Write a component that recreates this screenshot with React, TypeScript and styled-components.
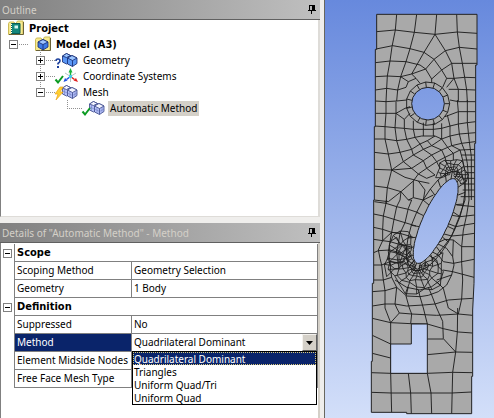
import React from "react";
import styled, { createGlobalStyle } from "styled-components";

const headingFont = `"DejaVu Sans Condensed", "DejaVu Sans", sans-serif`;

const GlobalStyle = createGlobalStyle`
  * { box-sizing: border-box; }
  html, body, #root { height: 100%; }
  body {
    margin: 0;
    background: #efeeec;
    color: #000;
    font: 10px/16px "Noto Sans", "Open Sans", sans-serif;
  }
  ul { list-style: none; margin: 0; padding: 0; }
`;

const Workspace = styled.div`
  display: grid;
  grid-template-columns: minmax(0, 320fr) minmax(0, 174fr);
  min-height: 100%;
`;

const Sidebar = styled.div`
  display: flex;
  flex-direction: column;
  gap: 6px;
  min-width: 0;
`;

const Panel = styled.section<{ $grow?: boolean }>`
  display: flex;
  flex-direction: column;
  flex: ${(p) => (p.$grow ? "1 1 auto" : "0 0 auto")};
`;

const TitleBar = styled.header`
  display: flex;
  align-items: center;
  justify-content: space-between;
  height: 20px;
  padding: 0 4px 0 2px;
  background: linear-gradient(90deg, #808080, #c0c0c0);
  border-bottom: 1px solid #606060;
`;

const Title = styled.h2`
  margin: 0;
  font-size: 10px;
  font-weight: 400;
  color: #d4d0c8;
  white-space: nowrap;
`;

const PinButton = styled.button`
  display: flex;
  padding: 0;
  border: 0;
  background: none;
`;

const PanelBody = styled.div`
  flex: 1;
  background: #fff;
  border-left: 1px solid #808080;
  border-right: 2px solid #dedcd8;
`;

const TreeBody = styled(PanelBody)`
  min-height: 197px;
  padding-left: 7px;
  border-bottom: 1px solid #dedcd8;
`;

const TreeRow = styled.li<{ $level: number }>`
  display: flex;
  align-items: center;
  height: 16px;
  padding-left: ${(p) => p.$level * 27}px;
`;

const TreeLabel = styled.span<{ $bold?: boolean; $selected?: boolean }>`
  height: 15px;
  margin-left: 3px;
  padding: 0 2px;
  line-height: 15px;
  font-family: ${(p) => (p.$bold ? headingFont : "inherit")};
  font-size: ${(p) => (p.$bold ? 11 : 10)}px;
  font-weight: ${(p) => (p.$bold ? 700 : 400)};
  background: ${(p) => (p.$selected ? "#d4d0c8" : "transparent")};
  white-space: nowrap;
`;

const Toggle = styled.button`
  display: flex;
  flex: none;
  padding: 0;
  border: 0;
  background: none;
`;

const Icon = styled.svg`
  display: block;
  flex: none;
  overflow: visible;
`;

const PropertyBody = styled(PanelBody)`
  padding-top: 1px;
  border-right-color: #d4d0c8;
`;

const PropertyTable = styled.table`
  width: 100%;
  border-collapse: separate;
  border-spacing: 0;
  table-layout: fixed;
`;

const GutterCol = styled.col` width: 14px; `;
const NameCol = styled.col` width: 117px; `;

const Gutter = styled.td`
  padding: 0 0 0 1px;
  border-right: 1px solid #808080;
`;

const GroupHead = styled.th`
  height: 18px;
  padding: 0 2px;
  border-bottom: 1px solid #808080;
  border-right: 1px solid #808080;
  font-family: ${headingFont};
  font-size: 11px;
  line-height: 17px;
  text-align: left;
`;

const NameCell = styled.th<{ $active?: boolean }>`
  height: 18px;
  padding: 0 2px;
  border-bottom: 1px solid #808080;
  border-right: 1px solid #808080;
  font-weight: 400;
  line-height: 17px;
  text-align: left;
  white-space: nowrap;
  color: ${(p) => (p.$active ? "#fff" : "#000")};
  background: ${(p) => (p.$active ? "#0a246a" : "#fff")};
`;

const ValueCell = styled.td`
  position: relative;
  height: 18px;
  padding: 0 0 0 2px;
  border-bottom: 1px solid #808080;
  border-right: 1px solid #808080;
  line-height: 17px;
  white-space: nowrap;
`;

const Combo = styled.div`
  display: flex;
  height: 17px;
`;

const ComboSelect = styled.select`
  appearance: none;
  flex: 1;
  min-width: 0;
  height: 17px;
  padding: 0;
  border: 0;
  outline: 0;
  background: #fff;
  color: #000;
  font: inherit;
`;

const ComboArrow = styled.button`
  display: grid;
  place-items: center;
  width: 15px;
  height: 17px;
  padding: 0;
  border: 1px solid;
  border-color: #f4f2ee #606060 #606060 #f4f2ee;
  background: #d4d0c8;
`;

const OptionList = styled.ul`
  position: absolute;
  z-index: 1;
  top: 17px;
  left: 0;
  right: 0;
  border: 1px solid #000;
  background: #fff;
`;

const Option = styled.li<{ $active?: boolean }>`
  height: 13px;
  border: 1px dotted ${(p) => (p.$active ? "#d8c878" : "transparent")};
  line-height: 12px;
  color: ${(p) => (p.$active ? "#fff" : "#000")};
  background: ${(p) => (p.$active ? "#0a246a" : "#fff")};
`;

const Viewport = styled.main`
  margin-left: 4px;
  padding-left: 45px;
  border-left: 1px solid #68675f;
  background: linear-gradient(180deg, #6789dd, #d3dff9);
`;

const Pin = () => (
  <Icon width="8" height="10" viewBox="0 0 8 10" shapeRendering="crispEdges" aria-hidden="true">
    <path d="M1 0h6v5h1v1H0V5h1zM3 6h1v3H3z" fill="#000" />
    <path d="M2 1h2v4H2z" fill="#b8b8b8" />
  </Icon>
);

const Expander = ({ open }: { open: boolean }) => (
  <Icon width="11" height="11" viewBox="0 0 11 11" shapeRendering="crispEdges" aria-hidden="true">
    <path d="M1.5 1.5h8v8h-8z" fill="#fff" stroke="#808080" />
    <path d={open ? "M3 5h5v1H3z" : "M3 5h5v1H3zM5 3h1v5H5z"} fill="#000" />
  </Icon>
);

const Dots = ({ d }: { d: string }) => (
  <path d={d} fill="none" stroke="#909090" strokeDasharray="1 1" shapeRendering="crispEdges" />
);

const Lead = ({ width = 9, up = 0, down = 0 }: { width?: number; up?: number; down?: number }) => (
  <Icon width={width} height="16" viewBox={`0 0 ${width} 16`} aria-hidden="true">
    <Dots d="M0 8.500H9" />
    {up > 0 && <Dots d={`M-5.500 ${3 - up}V3`} />}
    {down > 0 && <Dots d={`M-5.500 14V${14 + down}`} />}
  </Icon>
);

const FolderBack = () => (
  <>
    <path d="M.5 3.500l1-1.500H6l1 1.500h1L9.500 1H15v13.500H.5z" fill="#f7ea90" stroke="#cdbb55" />
    <path d="M1 14.500h14.500V2" fill="none" stroke="#6b6238" />
  </>
);

const ProjectIcon = () => (
  <Icon width="16" height="16" viewBox="0 0 16 16" aria-hidden="true">
    <FolderBack />
    <path d="M3.500 3.500h8.500v10H3.500z" fill="#15877b" stroke="#0a5a52" />
    <path d="M3.500 4v9" stroke="#fff" strokeDasharray="1 1" />
    <path d="M6.500 5.500h3.500v3H6.500z" fill="#d6f5f0" />
  </Icon>
);

const ModelIcon = () => (
  <Icon width="16" height="16" viewBox="0 0 16 16" aria-hidden="true">
    <FolderBack />
    <g stroke="#14286e" strokeWidth=".8" strokeLinejoin="round">
      <path d="M8 3.500l5 2.500v5l-5 3-5-3V6z" fill="#3f7ae6" />
      <path d="M8 3.500L13 6 8 8.500 3 6z" fill="#9cc2ff" />
      <path d="M8 8.500V14" />
    </g>
  </Icon>
);

const Tick = () => <path d="M.5 11.500L3 14.500 8 8" fill="none" stroke="#0c9b22" strokeWidth="2" />;
const Bolt = () => <path d="M5 3L0 10h3l-2 6 7-8H5l3-5z" fill="#ffd030" stroke="#eda51c" strokeWidth=".7" />;
const Question = () => (
  <>
    <path d="M1 9q0-2 2-2t2 2q0 1-2 2.500v1" fill="none" stroke="#1b3f9c" strokeWidth="1.600" />
    <path d="M2 14h2v2H2z" fill="#1b3f9c" />
  </>
);

const Blocks = ({ meshed }: { meshed?: boolean }) => {
  const face = meshed ? "#b4c0f8" : "#5a96f4";
  const top = meshed ? "#f4f5ff" : "#9cc6ff";
  return (
    <g stroke={meshed ? "#3a4688" : "#14286e"} strokeWidth=".8" strokeLinejoin="round">
      <path d="M7.500 4l4-2.500 4 2v6l-4 2.500-4-2z" fill={face} />
      <path d="M7.500 4l4-2.500 4 2-4 2z" fill={top} />
      <path d="M12.500 6l4.500-2.500L22 6v5.500L17.500 14.500l-5-2.500z" fill={face} />
      <path d="M12.500 6L17 3.500 22 6l-4.500 2.500z" fill={top} />
      <path d="M17.500 8.500v6" />
      {meshed && (
        <path d="M9.500 5v6M7.500 7l5 2M15 7.500v5.500M20 7v5.500M12.500 9l5 2.500L22 9" fill="none" stroke="#5563a8" strokeWidth=".4" />
      )}
    </g>
  );
};

const ItemIcon = ({ status, kind }: { status: "ask" | "ok" | "bolt"; kind: "geometry" | "axes" | "mesh" }) => (
  <Icon width="23" height="16" viewBox="0 0 23 16" aria-hidden="true">
    {kind === "axes" ? (
      <g fill="none">
        <path d="M10 5l5.500 3.500L21 5M15.500 9v5" stroke="#b9c4c4" />
        <path d="M15.500 8.500V3" stroke="#19b43c" strokeWidth="1.500" />
        <path d="M13.500 4.500l2-4.500 2 4.500z" fill="#19b43c" />
        <path d="M15.500 8.500l-4 3" stroke="#2050e0" strokeWidth="1.500" />
        <path d="M8.500 14l1.500-4 2.500 2.500z" fill="#2050e0" />
        <path d="M15.500 8.500l4 3" stroke="#e02020" strokeWidth="1.500" />
        <path d="M23 14l-4.500-1.500L21 10z" fill="#e02020" />
        <path d="M14 7h3v3h-3z" fill="#46c8e8" />
      </g>
    ) : (
      <Blocks meshed={kind === "mesh"} />
    )}
    {status === "ok" && <Tick />}
    {status === "bolt" && <Bolt />}
    {status === "ask" && <Question />}
  </Icon>
);

/* Mesh geometry; three drawing units to one screen pixel. */
const BODY =
  "M20 43H321V195H317V430H314V660L312 850L308 930V1129H305V1241H110V1237H4V1084H7V850H11V600H13V380H16V148H20Z";
const NOTCH = "M124 972H172V1120H62V1032H124Z";
const CIRCLE = "M125 311a49 49 0 1 0 98 0a49 49 0 1 0 -98 0Z";

const rad = (deg: number) => (deg * Math.PI) / 180;
const SLOT = { cx: 197, cy: 663, rx: 39, ry: 138, tilt: 24.4 };

const slotPoint = (deg: number, grow: number) => {
  const x = (SLOT.rx + grow) * Math.cos(rad(deg));
  const y = (SLOT.ry + grow) * Math.sin(rad(deg));
  const t = rad(SLOT.tilt);
  return [
    Math.round(SLOT.cx + x * Math.cos(t) - y * Math.sin(t)),
    Math.round(SLOT.cy + x * Math.sin(t) + y * Math.cos(t)),
  ];
};

const toPath = (points: number[][], close = false) =>
  "M" + points.map((p) => p.join(" ")).join("L") + (close ? "Z" : "");

const range = (from: number, to: number, step: number) => {
  const out: number[] = [];
  for (let v = from; v <= to; v += step) out.push(v);
  return out;
};

const slotEdge = toPath(range(0, 355, 5).map((d) => slotPoint(d, 0)), true);
const slotRing = toPath(range(0, 345, 15).map((d) => slotPoint(d, 24)), true);
const slotSpokes = range(0, 345, 15).map((d) => toPath([slotPoint(d, 0), slotPoint(d, 24)])).join("");

const fan = (cx: number, cy: number, from: number, to: number, step: number, radii: number[]) => {
  const at = (r: number, d: number) => {
    const wobble = 1 + 0.12 * Math.sin(d * 7 + r * 3);
    const turn = d + 4 * Math.sin(r * 5 + d);
    return [Math.round(cx + r * wobble * Math.cos(rad(turn))), Math.round(cy + r * wobble * Math.sin(rad(turn)))];
  };
  const rings = radii.map((r) => toPath(range(from, to, step).map((d) => at(r, d))));
  const spokes = range(from, to, step).map((d, i) => toPath(radii.slice(i % 2).map((r) => at(r, d))));
  return rings.join("") + spokes.join("");
};

const topFan = fan(246, 522, 165, 405, 20, [7, 14, 22, 32, 45]);
const lowFan = fan(142, 800, -25, 235, 20, [7, 13, 21, 31, 44, 60, 80]);
const lowSide = fan(128, 778, 150, 262, 16, [14, 24, 36, 50, 66, 84]);
const circlePoint = (d: number, r: number) => [
  Math.round(174 + r * Math.cos(rad(d))),
  Math.round(311 + r * Math.sin(rad(d))),
];
const holeRing =
  toPath(range(0, 336, 24).map((d) => circlePoint(d, 65)), true) +
  range(0, 336, 24).map((d) => toPath([circlePoint(d, 49), circlePoint(d, 65)])).join("");

const UPPER =
  "M20 95L75 90 133 97 195 103 262 96 321 100M18 147L68 137 120 146 162 157 192 178 226 152 268 142 321 147" +
  "M16 188L60 183 108 185 150 195 167 207 192 178 215 210M167 207L185 237 215 210 245 190 321 190" +
  "M16 230L52 228 92 230 125 222 167 207M215 210L230 235 252 235 284 232 317 233M185 237V248" +
  "M16 270L50 265 83 270 108 262 115 245 138 235 125 222M92 230L115 245M138 235L150 250M230 235L218 262M252 235L230 262" +
  "M16 303L48 305 80 303 110 300M236 268H265L317 270M240 300L265 305 317 305" +
  "M80 43L76 90 66 140 60 183 52 228 50 265 48 305M140 43L133 97 120 146 108 185 92 230 83 270 80 303" +
  "M200 43L195 103 162 157 125 222M195 103L226 152 245 190 252 235 265 268 265 305" +
  "M260 43L262 96 268 142 277 190 284 232 290 270 292 305";

const MIDDLE =
  "M17 40H78M13 78L45 80 75 83 103 85 130 88H190L215 85 240 78 265 72 292 68 317 65" +
  "M13 117H45L80 122 110 118 135 112 155 108H195L215 117M13 157L55 162 90 157 125 148 150 132 172 122 195 108" +
  "M13 208L65 210 100 185 130 165 160 148 185 137 215 117 240 108 268 102 317 98" +
  "M65 210L125 205 160 182 185 165 215 150 245 137 275 130 315 125M13 258L52 263 93 275 130 243 145 222 170 205 200 185 225 172 250 160 270 150 315 148" +
  "M65 210L105 232 145 243 178 250 M125 205L145 222 170 235 195 225M13 300L55 305 93 275 115 300 130 293 160 300 190 285M130 243V293M145 243L165 270 160 300" +
  "M48 5V40L45 80V117L55 162 65 210 52 263 48 310M78 5V40L75 83 80 122 90 157 100 185 125 205M78 40L105 25 120 20M78 40L103 58 120 40" +
  "M103 58V85L110 118 125 148 130 165 160 182 170 205 195 225M130 62V88L135 112 150 132 160 148 185 165 200 185 210 205" +
  "M160 68V108M190 68V108M172 122L185 137 215 150 225 172 230 190M215 70V85L215 117 235 145 250 160V180" +
  "M232 45L240 78V108L245 137 270 150 278 180 286 220 285 300M262 0L265 35V72L268 102 275 130 285 155 292 190 295 230 297 300" +
  "M292 0V68L295 98 298 125 304 170V300M225 50L265 35H317" +
  "M274 165H315M280 180H314M284 200H314M286 218H314M282 235H314M278 252H314M278 270H314M272 290H314M93 275L90 300M115 300L125 300";

const LOWER =
  "M13 5L48 10 80 20 115 28 145 38M11 42L40 48 72 58 105 68 138 78M11 82L38 88 65 97 90 100 130 112M11 118L38 122 60 125 88 133 120 140" +
  "M11 158L25 152 60 150 95 160M11 195L35 195 60 185 85 190M9 240L40 240 65 232M7 275L45 272 80 262M7 318L45 312H75L110 318 160 315 195 312 235 300 275 297 308 295" +
  "M50 0L48 10 40 48 38 88V122L25 150 30 175 35 195 40 240 45 272 45 324M90 0L80 20 72 58 65 97 60 125 55 155 60 185 62 210 65 232 80 262 75 312" +
  "M125 0L115 25 105 68 90 100 85 130 78 160M38 122L65 97 90 100M60 125L80 112 90 135" +
  "M248 35L270 50 314 45M260 15L314 20M232 70L258 80 283 75 314 70M215 100L245 108 278 105 313 100M200 130L225 118 250 120 275 140 312 140" +
  "M297 0L290 45 280 90 275 140V190L278 240 275 297 265 342M285 0L268 50 245 108 225 135 200 165" +
  "M185 155L205 165 220 185M200 130L230 145 248 170 252 195 245 225 230 255 205 275 175 286 150 290 110 288 80 262M220 185L250 190 312 178M175 165L200 180 205 200" +
  "M218 210L248 215 312 232M200 240L245 225M250 120L248 170M205 200L220 215 212 240 185 260 150 270 110 262 75 240" +
  "M115 260L108 288 118 324M145 270L150 290 160 324M175 262L185 285 200 324M200 245L220 265 235 324";

const FOOT =
  "M7 31L62 44 122 47 172 48 220 62 265 72 308 75M88 15L125 18 200 22 265 18 308 22M62 44L88 15 80 0 75 -12M45 0L62 44M118 0L125 18 122 47M160 0L172 48" +
  "M200 0L218 40 220 92 257 132M263 0L262 72 257 132 248 193 245 317M235 0L265 18M172 93H220M172 140L257 132 308 133M7 82L62 108M7 136L62 150" +
  "M4 194L62 196H172L248 193 308 194M4 253L64 255H183L245 255 305 252M62 44V196L65 317M115 196L122 255 124 317M172 196L183 255 185 317";

const MeshPlot = () => (
  <Icon width="124" height="418" viewBox="0 0 372 1254" role="img" aria-label="Meshed plate">
    <defs>
      <clipPath id="solid">
        <path d={BODY + NOTCH + CIRCLE + slotEdge} clipRule="evenodd" />
      </clipPath>
    </defs>
    <path d={BODY + NOTCH + CIRCLE + slotEdge} fill="#a9a9a9" fillRule="evenodd" />
    <g clipPath="url(#solid)" fill="none" stroke="#1c1c1c" strokeWidth="2.800">
      <path d={UPPER} />
      <path d={MIDDLE} transform="translate(0 300)" />
      <path d={LOWER} transform="translate(0 600)" />
      <path d={FOOT} transform="translate(0 924)" />
      <path d={holeRing + slotRing + slotSpokes} />
      <path d={topFan + lowFan + lowSide} strokeWidth="2.600" />
    </g>
    <path d={BODY + NOTCH + CIRCLE + slotEdge} fill="none" stroke="#222" strokeWidth="3" />
  </Icon>
);

const PanelTitle = ({ id, children }: { id: string; children: React.ReactNode }) => (
  <TitleBar>
    <Title id={id}>{children}</Title>
    <PinButton type="button" aria-label="Auto hide"><Pin /></PinButton>
  </TitleBar>
);

const ExpandButton = ({ open, name }: { open: boolean; name: string }) => (
  <Toggle type="button" aria-expanded={open} aria-label={name}><Expander open={open} /></Toggle>
);

const METHODS = ["Quadrilateral Dominant", "Triangles", "Uniform Quad/Tri", "Uniform Quad"];

const Group = ({ name }: { name: string }) => (
  <tr>
    <Gutter><ExpandButton open name={name} /></Gutter>
    <GroupHead colSpan={2} scope="colgroup">{name}</GroupHead>
  </tr>
);

const Property = ({ name, value }: { name: string; value?: string }) => (
  <tr>
    <Gutter />
    <NameCell scope="row">{name}</NameCell>
    <ValueCell>{value}</ValueCell>
  </tr>
);

export default function App() {
  return (
    <>
      <GlobalStyle />
      <Workspace>
        <Sidebar>
          <Panel aria-labelledby="outline">
            <PanelTitle id="outline">Outline</PanelTitle>
            <TreeBody>
              <ul>
                <TreeRow $level={0}><ProjectIcon /><TreeLabel $bold>Project</TreeLabel></TreeRow>
                <TreeRow $level={0}>
                  <ExpandButton open name="Model" /><Lead width={16} />
                  <ModelIcon /><TreeLabel $bold>Model (A3)</TreeLabel>
                </TreeRow>
                <TreeRow $level={1}>
                  <ExpandButton open={false} name="Geometry" /><Lead up={5} down={5} />
                  <ItemIcon status="ask" kind="geometry" /><TreeLabel>Geometry</TreeLabel>
                </TreeRow>
                <TreeRow $level={1}>
                  <ExpandButton open={false} name="Coordinate Systems" /><Lead down={5} />
                  <ItemIcon status="ok" kind="axes" /><TreeLabel>Coordinate Systems</TreeLabel>
                </TreeRow>
                <TreeRow $level={1}>
                  <ExpandButton open name="Mesh" /><Lead />
                  <ItemIcon status="bolt" kind="mesh" /><TreeLabel>Mesh</TreeLabel>
                </TreeRow>
                <TreeRow $level={2}>
                  <Icon width="20" height="16" viewBox="0 0 20 16" aria-hidden="true"><Dots d="M5.500 0V8.500H20" /></Icon>
                  <ItemIcon status="ok" kind="mesh" /><TreeLabel $selected>Automatic Method</TreeLabel>
                </TreeRow>
              </ul>
            </TreeBody>
          </Panel>
          <Panel $grow aria-labelledby="details">
            <PanelTitle id="details">Details of "Automatic Method" - Method</PanelTitle>
            <PropertyBody>
              <PropertyTable aria-labelledby="details">
                <colgroup><GutterCol /><NameCol /><col /></colgroup>
                <tbody>
                  <Group name="Scope" />
                  <Property name="Scoping Method" value="Geometry Selection" />
                  <Property name="Geometry" value="1 Body" />
                  <Group name="Definition" />
                  <Property name="Suppressed" value="No" />
                  <tr>
                    <Gutter />
                    <NameCell scope="row" $active><label htmlFor="method">Method</label></NameCell>
                    <ValueCell>
                      <Combo>
                        <ComboSelect id="method" defaultValue={METHODS[0]}>
                          {METHODS.map((m) => <option key={m}>{m}</option>)}
                        </ComboSelect>
                        <ComboArrow type="button" aria-label="Show methods">
                          <Icon width="7" height="4" viewBox="0 0 7 4" aria-hidden="true"><path d="M0 0h7L3.500 4z" /></Icon>
                        </ComboArrow>
                      </Combo>
                      <OptionList role="listbox" aria-label="Method">
                        {METHODS.map((m, i) => (
                          <Option key={m} role="option" aria-selected={i === 0} $active={i === 0}>{m}</Option>
                        ))}
                      </OptionList>
                    </ValueCell>
                  </tr>
                  <Property name="Element Midside Nodes" />
                  <Property name="Free Face Mesh Type" />
                </tbody>
              </PropertyTable>
            </PropertyBody>
          </Panel>
        </Sidebar>
        <Viewport><MeshPlot /></Viewport>
      </Workspace>
    </>
  );
}
